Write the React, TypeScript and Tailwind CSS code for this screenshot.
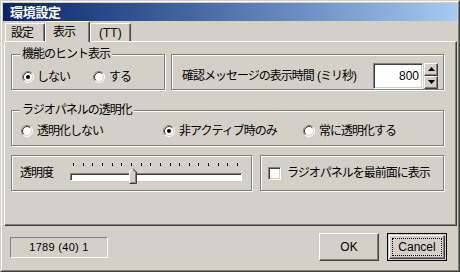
import React from "react";

function Radio({ checked = false }: { checked?: boolean }) {
  return (
    <svg width="12" height="12" viewBox="0 0 12 12" className="shrink-0 block">
      <circle cx="6" cy="6" r="5" fill="#ffffff" />
      <path d="M2.11 9.89A5.5 5.5 0 0 1 9.89 2.11" fill="none" stroke="#808080" />
      <path d="M9.89 2.11A5.5 5.5 0 0 1 2.11 9.89" fill="none" stroke="#ffffff" />
      <path d="M2.82 9.18A4.5 4.5 0 0 1 9.18 2.82" fill="none" stroke="#404040" />
      <path d="M9.18 2.82A4.5 4.5 0 0 1 2.82 9.18" fill="none" stroke="#d4d0c8" />
      {checked && <circle cx="6" cy="6" r="2" fill="#000000" />}
    </svg>
  );
}

function Group({
  label,
  className = "",
  children,
}: {
  label?: string;
  className?: string;
  children?: React.ReactNode;
}) {
  return (
    <div
      className={`relative h-[36px] border border-[#808080] shadow-[inset_1px_1px_0_#ffffff,1px_1px_0_#ffffff] ${className}`}
    >
      {label && (
        <span className="absolute left-[8px] top-[-8px] bg-[#d4d0c8] px-[2px] leading-[14px] tracking-[-1px] whitespace-nowrap">
          {label}
        </span>
      )}
      {children}
    </div>
  );
}

function Tab({
  label,
  active = false,
  className = "",
}: {
  label: string;
  active?: boolean;
  className?: string;
}) {
  return (
    <div
      className={`flex items-center border-t border-l border-r border-t-white border-l-white border-r-[#404040] rounded-tl-[2px] rounded-tr-[2px] shadow-[inset_-1px_0_0_#808080] bg-[#d4d0c8] whitespace-nowrap ${
        active ? "relative z-10 h-[21px] mb-[-1px]" : "h-[18px]"
      } ${className}`}
    >
      {label}
    </div>
  );
}

const ticks = Array.from({ length: 18 }, (_, i) => 3 + Math.round(i * 9.65));

export default function App() {
  return (
    <div className="w-[460px] h-[272px] bg-[#d4d0c8] border border-t-[#d4d0c8] border-l-[#d4d0c8] border-r-[#404040] border-b-[#404040] font-['Liberation_Sans','Noto_Sans_CJK_JP',sans-serif] text-[12px] text-black select-none">
      <div className="h-full border border-t-white border-l-white border-r-[#808080] border-b-[#808080] p-px flex flex-col">
        {/* title bar */}
        <div className="h-[18px] shrink-0 bg-gradient-to-r from-[#0a246a] to-[#a6caf0] flex items-center pl-[7px] text-white font-bold text-[13px] leading-none tracking-[-0.3px]">
          環境設定
        </div>

        {/* tabs */}
        <div className="h-[20px] shrink-0 flex items-end pl-[2px] tracking-[-1px]">
          <Tab label="設定" className="w-[40px] pl-[5px]" />
          <Tab label="表示" active className="w-[45px] pl-[7px]" />
          <Tab label="(TT)" className="w-[41px] pl-[8px] tracking-[0px]" />
        </div>

        {/* tab panel */}
        <div className="ml-px h-[185px] shrink-0 border border-t-white border-l-white border-r-[#404040] border-b-[#404040] shadow-[inset_-1px_-1px_0_#808080] pl-[6px] pt-[12px] pr-[12px] flex flex-col">
          {/* row 1 */}
          <div className="flex gap-[6px]">
            <Group label="機能のヒント表示" className="w-[154px] flex items-center pl-[10px] pt-[10px]">
              <div className="w-[71px] flex items-center gap-[3px]">
                <Radio checked />
                <span className="tracking-[-1px]">しない</span>
              </div>
              <div className="flex items-center gap-[4px]">
                <Radio />
                <span className="tracking-[-1px]">する</span>
              </div>
            </Group>
            <Group className="flex-1 flex items-center pl-[10px] pr-[5px] pt-[7px]">
              <span className="tracking-[-1px] whitespace-nowrap">
                確認メッセージの表示時間<span className="tracking-[0px]"> </span>(ミリ秒)
              </span>
              <div className="ml-auto flex items-stretch gap-px">
                <div className="w-[50px] h-[26px] bg-white border border-t-[#808080] border-l-[#808080] border-b-white border-r-white shadow-[inset_1px_1px_0_#404040,inset_-1px_-1px_0_#d4d0c8] flex items-center justify-end pr-[3px]">
                  800
                </div>
                <div className="flex flex-col w-[14px]">
                  <div className="h-[13px] border border-t-white border-l-white border-r-[#404040] border-b-[#404040] shadow-[inset_-1px_-1px_0_#808080] flex items-center justify-center">
                    <svg width="7" height="4" viewBox="0 0 7 4" className="block">
                      <path d="M3.5 0L7 4H0Z" fill="#000" />
                    </svg>
                  </div>
                  <div className="h-[13px] border border-t-white border-l-white border-r-[#404040] border-b-[#404040] shadow-[inset_-1px_-1px_0_#808080] flex items-center justify-center">
                    <svg width="7" height="4" viewBox="0 0 7 4" className="block">
                      <path d="M0 0H7L3.5 4Z" fill="#000" />
                    </svg>
                  </div>
                </div>
              </div>
            </Group>
          </div>

          {/* row 2 */}
          <Group label="ラジオパネルの透明化" className="mt-[20px] flex items-center pl-[9px] pt-[6px]">
            <div className="w-[142px] flex items-center gap-[4px]">
              <Radio />
              <span className="tracking-[-1px]">透明化しない</span>
            </div>
            <div className="w-[140px] flex items-center gap-[4px]">
              <Radio checked />
              <span className="tracking-[-1px]">非アクティブ時のみ</span>
            </div>
            <div className="flex items-center gap-[4px]">
              <Radio />
              <span className="tracking-[-1px]">常に透明化する</span>
            </div>
          </Group>

          {/* row 3 */}
          <div className="mt-[9px] flex gap-[8px]">
            <Group className="w-[241px] flex items-center pl-[8px]">
              <span className="w-[50px] tracking-[-1px]">透明度</span>
              <div className="relative w-[172px] h-[22px] flex flex-col">
                <svg width="172" height="4" viewBox="0 0 172 4" className="block mt-px">
                  {ticks.map((x) => (
                    <rect key={x} x={x} y={0} width={1} height={3} fill="#000" />
                  ))}
                </svg>
                <div className="mt-[6px] h-[8px] bg-white border border-t-[#808080] border-l-[#808080] border-b-white border-r-white shadow-[inset_1px_1px_0_#404040]" />
                <svg
                  width="8"
                  height="16"
                  viewBox="0 0 8 16"
                  className="absolute left-[59px] top-[6px] block"
                >
                  <path d="M0.5 15.5V4L4 0.5L7.5 4V15.5Z" fill="#d4d0c8" />
                  <path d="M0.5 15.5V4L4 0.5" fill="none" stroke="#ffffff" />
                  <path d="M4 0.5L7.5 4V15.5H0.5" fill="none" stroke="#404040" />
                  <path d="M4 1.9L6.5 4.4V14.5H1.5" fill="none" stroke="#808080" />
                </svg>
              </div>
            </Group>
            <Group className="flex-1 flex items-center pl-[7px] gap-[6px]">
              <div className="w-[13px] h-[13px] bg-white border border-t-[#808080] border-l-[#808080] border-b-white border-r-white shadow-[inset_1px_1px_0_#404040,inset_-1px_-1px_0_#d4d0c8]" />
              <span className="tracking-[-1px] whitespace-nowrap">ラジオパネルを最前面に表示</span>
            </Group>
          </div>
        </div>

        {/* bottom bar */}
        <div className="flex-1 flex items-start pl-[7px] pr-[10px]">
          <div className="mt-[11px] w-[98px] h-[21px] border border-t-[#808080] border-l-[#808080] border-b-white border-r-white flex items-center justify-center text-[11px] tracking-[0.3px]">
            1789 (40) 1
          </div>
          <div className="ml-auto mt-[7px] flex gap-[8px]">
            <div className="w-[60px] h-[28px] border border-t-white border-l-white border-r-[#404040] border-b-[#404040] shadow-[inset_-1px_-1px_0_#808080] flex items-center justify-center">
              OK
            </div>
            <div className="w-[60px] h-[28px] border border-black p-px">
              <div className="h-full border border-t-white border-l-white border-r-[#404040] border-b-[#404040] shadow-[inset_-1px_-1px_0_#808080] p-[2px]">
                <div className="h-full border border-dotted border-black flex items-center justify-center">
                  Cancel
                </div>
              </div>
            </div>
          </div>
        </div>
      </div>
    </div>
  );
}
